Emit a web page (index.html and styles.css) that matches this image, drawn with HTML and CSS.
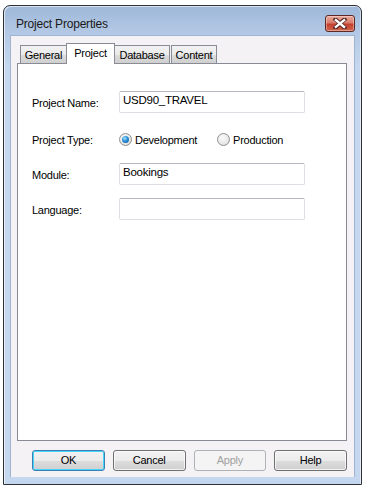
FILE: index.html
```html
<!DOCTYPE html>
<html>
<head>
<meta charset="utf-8">
<link rel="stylesheet" href="styles.css">
</head>
<body>
<div class="window">
  <div class="titlebar">
    <span class="title">Project Properties</span>
    <div class="close">
      <svg width="14" height="11" viewBox="0 0 14 11">
        <path d="M2.5 1.5 L11.5 9.5 M11.5 1.5 L2.5 9.5" stroke="#4e2420" stroke-width="4.2" stroke-linecap="square"/>
        <path d="M2.8 2 L11.2 9 M11.2 2 L2.8 9" stroke="#ffffff" stroke-width="2.3" stroke-linecap="square"/>
      </svg>
    </div>
  </div>
  <div class="client">
    <div class="tabs">
      <div class="tab t-general">General</div>
      <div class="tab active">Project</div>
      <div class="tab t-database">Database</div>
      <div class="tab t-content">Content</div>
    </div>
    <div class="panel">
      <div class="row r1">
        <span class="label">Project Name:</span>
        <div class="input">USD90_TRAVEL</div>
      </div>
      <div class="row r2">
        <span class="label">Project Type:</span>
        <div class="radios">
          <span class="radio checked"><span class="dot"></span></span>
          <span class="rtext">Development</span>
          <span class="radio"></span>
          <span class="rtext">Production</span>
        </div>
      </div>
      <div class="row r3">
        <span class="label">Module:</span>
        <div class="input">Bookings</div>
      </div>
      <div class="row r4">
        <span class="label">Language:</span>
        <div class="input"></div>
      </div>
    </div>
    <div class="buttons">
      <div class="btn default">OK</div>
      <div class="btn">Cancel</div>
      <div class="btn disabled">Apply</div>
      <div class="btn">Help</div>
    </div>
  </div>
</div>
</body>
</html>
```
FILE: styles.css
```css
html, body {
  margin: 0;
  padding: 0;
  background: #ffffff;
}
body {
  font-family: "Liberation Sans", Arial, sans-serif;
  font-size: 11px;
  letter-spacing: -0.25px;
  color: #000;
}
.window {
  margin: 5px 0 0 3px;
  width: 359px;
  height: 480px;
  border: 1px solid #2e3236;
  border-radius: 7px 7px 0 0;
  background: linear-gradient(to bottom, #9fb8d9 0px, #b5cae6 30px, #c4d7ee 60px, #c4d7ee 100%);
  padding: 0 7px 7px 7px;
  box-sizing: border-box;
  display: flex;
  flex-direction: column;
  box-shadow: inset 1px 1px 0 rgba(255,255,255,0.6), inset -1px 0 0 rgba(255,255,255,0.5);
}
.titlebar {
  height: 29px;
  display: flex;
  align-items: center;
  justify-content: space-between;
  padding-left: 5px;
}
.title {
  font-size: 12px;
  letter-spacing: -0.2px;
  color: #1a1a1a;
  margin-top: 7px;
}
.close {
  width: 30px;
  height: 17px;
  box-sizing: border-box;
  border: 1px solid #5b2a25;
  border-radius: 3px;
  background: linear-gradient(to bottom, #e9a89a 0%, #d97d6e 45%, #c4402c 55%, #d2664f 100%);
  display: flex;
  align-items: center;
  justify-content: center;
  margin-top: 6px;
  margin-right: -1px;
  box-shadow: inset 0 0 0 1px rgba(255,255,255,0.35);
}
.close svg { display: block; }
.client {
  flex: 1;
  background: #f5f2f5;
  padding: 7px 7px 0 6px;
  display: flex;
  flex-direction: column;
  border: 1px solid #9fb4cf;
  border-bottom: none;
  margin: 0 -1px;
  box-sizing: border-box;
}
.tabs {
  display: flex;
  align-items: flex-end;
  height: 20px;
  padding-left: 3px;
  position: relative;
  z-index: 1;
}
.tab {
  height: 18px;
  line-height: 18px;
  border: 1px solid #898c95;
  border-bottom: none;
  background: linear-gradient(to bottom, #f2f2f2 0%, #ebebeb 50%, #dddddd 51%, #cfcfcf 100%);
  text-align: center;
  color: #000;
  box-sizing: border-box;
}
.t-general { width: 47px; }
.t-database { width: 56px; margin-left: -1px; }
.t-content { width: 46px; margin-left: 1px; }
.tab.active {
  width: 49px;
  height: 21px;
  line-height: 18px;
  background: #ffffff;
  margin: 0 0 -1px -1px;
  position: relative;
  z-index: 2;
}
.panel {
  height: 378px;
  background: #ffffff;
  border: 1px solid #898c95;
  box-sizing: border-box;
  padding: 27px 0 0 14px;
  display: flex;
  flex-direction: column;
}
.row {
  display: flex;
  align-items: center;
  height: 22px;
}
.r2 { margin-top: 15px; }
.r3 { margin-top: 13px; }
.r4 { margin-top: 13px; }
.label {
  width: 87px;
  color: #000;
  padding-top: 1px;
}
.input {
  width: 186px;
  height: 22px;
  border: 1px solid #dcdfe4;
  border-top-color: #b5b8be;
  border-radius: 2px;
  background: #fff;
  padding: 2px 3px 0 3px;
  box-sizing: border-box;
  line-height: 13px;
  font-size: 11.5px;
}
.radios {
  display: flex;
  align-items: center;
}
.radio {
  width: 11px;
  height: 11px;
  border-radius: 50%;
  border: 1px solid #8e8f8f;
  background: radial-gradient(circle at 40% 35%, #fafafa 0%, #e8e8e8 60%, #cfcfcf 100%);
  display: flex;
  align-items: center;
  justify-content: center;
  box-sizing: content-box;
}
.radio.checked .dot {
  width: 7px;
  height: 7px;
  border-radius: 50%;
  background: radial-gradient(circle at 40% 35%, #a9e4ff 0%, #2a8ed8 45%, #0f4c8c 100%);
}
.rtext {
  margin-left: 3px;
  margin-right: 20px;
  padding-top: 1px;
}
.buttons {
  display: flex;
  gap: 8px;
  padding-left: 15px;
  margin-top: 9px;
}
.btn {
  width: 73px;
  height: 21px;
  box-sizing: border-box;
  border: 1px solid #707070;
  border-radius: 3px;
  background: linear-gradient(to bottom, #f2f2f2 0%, #ebebeb 50%, #dddddd 51%, #cfcfcf 100%);
  text-align: center;
  line-height: 19px;
  color: #000;
  box-shadow: inset 0 0 0 1px rgba(255,255,255,0.7);
}
.btn.default {
  border-color: #3c7fb1;
  box-shadow: inset 0 0 0 1px #48d5fd;
}
.btn.disabled {
  border-color: #adb2b5;
  background: #f4f4f4;
  color: #a0a0a0;
  box-shadow: none;
}
```
